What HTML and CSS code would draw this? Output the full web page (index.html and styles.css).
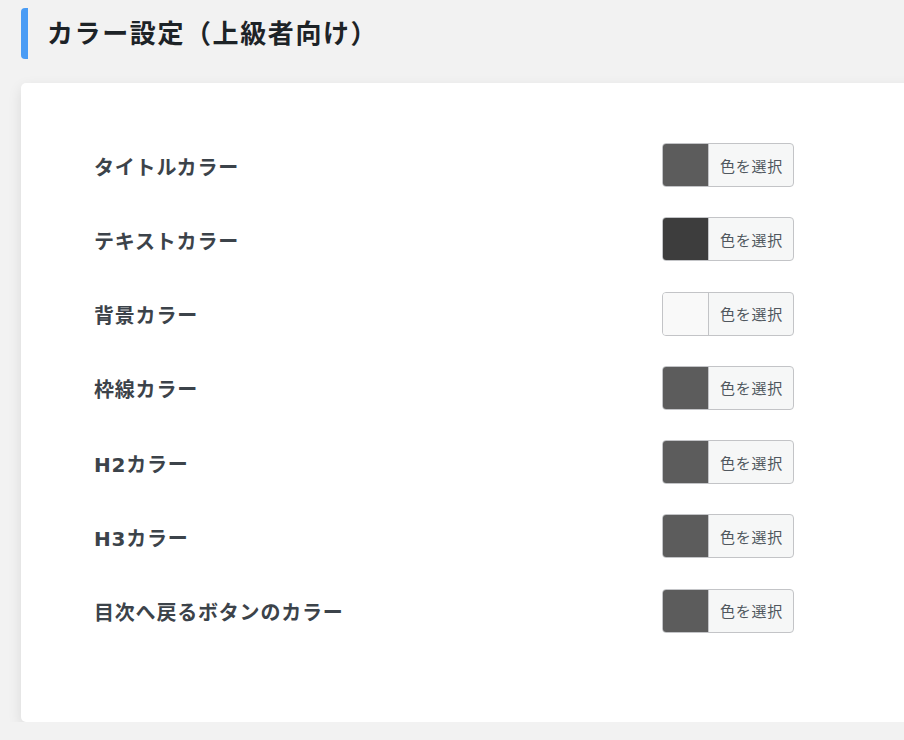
FILE: index.html
```html
<!DOCTYPE html>
<html lang="ja">
<head>
<meta charset="utf-8">
<link rel="stylesheet" href="styles.css">
</head>
<body>
<div class="page">
  <h2 class="section-title">カラー設定（上級者向け）</h2>
  <div class="card">
    <div class="rows">
      <div class="row"><span class="label">タイトルカラー</span><button class="picker"><span class="swatch" style="background:#5c5c5c"></span><span class="picker-text">色を選択</span></button></div>
      <div class="row"><span class="label">テキストカラー</span><button class="picker"><span class="swatch" style="background:#3d3d3d"></span><span class="picker-text">色を選択</span></button></div>
      <div class="row"><span class="label">背景カラー</span><button class="picker"><span class="swatch" style="background:#f9f9f9"></span><span class="picker-text">色を選択</span></button></div>
      <div class="row"><span class="label">枠線カラー</span><button class="picker"><span class="swatch" style="background:#5c5c5c"></span><span class="picker-text">色を選択</span></button></div>
      <div class="row"><span class="label">H2カラー</span><button class="picker"><span class="swatch" style="background:#5c5c5c"></span><span class="picker-text">色を選択</span></button></div>
      <div class="row"><span class="label">H3カラー</span><button class="picker"><span class="swatch" style="background:#5c5c5c"></span><span class="picker-text">色を選択</span></button></div>
      <div class="row"><span class="label">目次へ戻るボタンのカラー</span><button class="picker"><span class="swatch" style="background:#5c5c5c"></span><span class="picker-text">色を選択</span></button></div>
    </div>
  </div>
</div>
</body>
</html>
```

FILE: styles.css
```css
html, body {
  margin: 0;
  padding: 0;
  background: #f2f2f2;
  overflow: hidden;
}
body {
  font-family: "DejaVu Sans", "Noto Sans CJK JP", sans-serif;
  color: #3c434a;
}
.page {
  padding: 8px 0 0 21px;
}
.section-title {
  margin: 0;
  display: flex;
  align-items: center;
  height: 51px;
  border-left: 7px solid #4a9cf5;
  border-radius: 4px;
  padding-left: 19px;
  font-size: 26px;
  font-weight: 700;
  letter-spacing: 1.6px;
  color: #1d2327;
  line-height: 1;
  text-spacing-trim: space-all;
}
.card {
  margin-top: 24px;
  margin-right: -40px;
  background: #fff;
  border-radius: 5px;
  box-shadow: 0 5px 14px rgba(0, 0, 0, 0.1);
  height: 639px;
  box-sizing: border-box;
  padding: 60px 0 0 73px;
}
.rows {
  display: flex;
  flex-direction: column;
  gap: 30.3px;
  width: 700px;
}
.row {
  display: flex;
  align-items: center;
  justify-content: space-between;
  height: 44px;
}
.label {
  font-size: 20px;
  font-weight: 700;
  letter-spacing: 0.8px;
  color: #3c434a;
  line-height: 1;
  padding-top: 5px;
}
.picker {
  display: flex;
  align-items: stretch;
  width: 132px;
  height: 44px;
  padding: 0;
  border: 1px solid #c3c4c7;
  border-radius: 4px;
  background: #f6f7f7;
  overflow: hidden;
  font-family: inherit;
  cursor: pointer;
}
.swatch {
  width: 45px;
  flex: none;
  border-right: 1px solid #c3c4c7;
}
.picker-text {
  flex: 1;
  display: flex;
  align-items: center;
  justify-content: center;
  font-size: 15px;
  letter-spacing: 0.8px;
  color: #50575e;
  padding-left: 1px;
}
```
